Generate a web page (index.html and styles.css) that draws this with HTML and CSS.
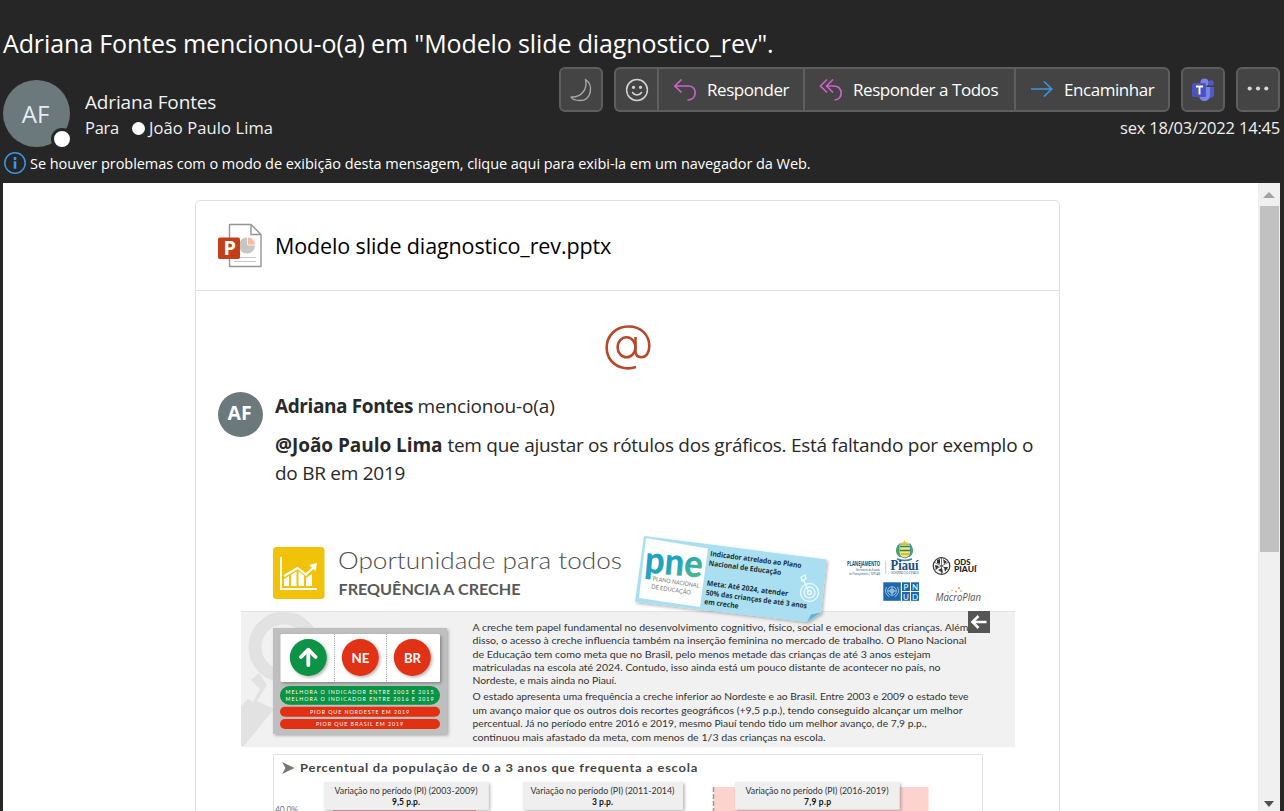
FILE: index.html
```html
<!DOCTYPE html>
<html lang="pt-BR">
<head>
<meta charset="utf-8">
<title>Modelo slide diagnostico_rev</title>
<link rel="stylesheet" href="styles.css">
</head>
<body>
<div class="window">
  <header class="mail-header">
    <h1 class="subject">Adriana Fontes mencionou-o(a) em "Modelo slide diagnostico_rev".</h1>
    <div class="meta">
      <div class="avatar">AF<span class="presence"></span></div>
      <div class="people">
        <div class="sender">Adriana Fontes</div>
        <div class="to"><span class="to-label">Para</span><span class="dot"></span><span class="to-name">João Paulo Lima</span></div>
      </div>
      <div class="right">
        <div class="actions">
          <button class="btn square"><svg width="24" height="24" viewBox="0 0 24 24" fill="none" stroke="#a8a8a8" stroke-width="1.4" stroke-linejoin="round"><path d="M16.500 1.500C25 7 22.500 22.500 11 22.500C7 22.500 3.500 21.500 2 19C12 19.500 19 11.500 16.500 1.500Z"/></svg></button>
          <div class="group">
            <button class="btn square"><svg width="24" height="24" viewBox="0 0 24 24" fill="none" stroke="#d2d2d2" stroke-width="1.5" stroke-linecap="round"><circle cx="12" cy="12" r="10.400"/><path d="M7.500 14.500c2 3.300 7 3.300 9 0"/><circle cx="8.500" cy="9.300" r=".9" fill="#d2d2d2"/><circle cx="15.500" cy="9.300" r=".9" fill="#d2d2d2"/></svg></button>
            <button class="btn reply"><svg width="24" height="24" viewBox="0 0 24 24" fill="none" stroke="#c864c8" stroke-width="1.700"><path d="M8.500 1.500L1.800 8L8.500 14.500M1.800 8H16C24.500 8 24.500 22 14.500 22"/></svg><span class="reply-text">Responder</span></button>
            <button class="btn reply-all"><svg width="24" height="24" viewBox="0 0 24 24" fill="none" stroke="#c864c8" stroke-width="1.700"><path d="M8 1.500L1.500 8L8 14.500M14 1.500L7.500 8L14 14.500M7.500 8H15C24.500 8 24.500 22 15.500 22"/></svg><span class="all-text">Responder a Todos</span></button>
            <button class="btn forward"><svg width="24" height="24" viewBox="0 0 24 24" fill="none" stroke="#3a96dd" stroke-width="1.700"><path d="M1 11H22M14 3.500L21.700 11L14 18.500"/></svg><span class="forward-text">Encaminhar</span></button>
          </div>
          <button class="btn square"><svg width="24" height="24" viewBox="0 0 24 24"><circle cx="20" cy="5" r="2.800" fill="#5059c9"/><path d="M16 9h7v7c0 3-2 4-4.500 4z" fill="#5059c9"/><circle cx="13.500" cy="4.500" r="4" fill="#7b83eb"/><path d="M8 9h11v8c0 8-11 8-11 0z" fill="#7b83eb"/><rect x="1" y="5" width="14" height="14" rx="1.500" fill="#4b53bc"/><path d="M5 8.500h7M8.500 8.500v8" stroke="#fff" stroke-width="1.900"/></svg></button>
          <button class="btn square"><svg width="24" height="24" viewBox="0 0 24 24" fill="#d6d6d6"><circle cx="3.700" cy="10.500" r="2.100"/><circle cx="12" cy="10.500" r="2.100"/><circle cx="20.300" cy="10.500" r="2.100"/></svg></button>
        </div>
        <div class="date">sex 18/03/2022 14:45</div>
      </div>
    </div>
    <div class="notice">
      <svg width="22" height="22" viewBox="0 0 22 22" fill="none" stroke="#3a96dd"><circle cx="11" cy="11" r="10.200" stroke-width="1.500"/><path d="M11 5v3M11 9.300v7.500" stroke-width="2.600"/></svg>
      <span class="notice-text">Se houver problemas com o modo de exibição desta mensagem, clique aqui para exibi-la em um navegador da Web.</span>
    </div>
  </header>

  <div class="viewer">
    <main class="page">
      <article class="card">
        <div class="file">
          <svg width="44" height="46" viewBox="0 0 44 46"><path d="M11.500 1.500H33L43 11.500V43.500H11.500Z" fill="#fff" stroke="#979593" stroke-width="1.400" stroke-linejoin="round"/><path d="M33 1.500V11.500H43" fill="none" stroke="#979593" stroke-width="1.400"/><circle cx="29" cy="22.500" r="8" fill="#c8c6c4"/><path d="M29.500 22V14a8 8 0 0 1 8 8z" fill="#f7b9a0" stroke="#fff" stroke-width=".8"/><path d="M16 34.500H38M16 38.500H38" stroke="#c8c6c4" stroke-width="1.200"/><rect x="0" y="14.500" width="22" height="21.500" rx="1.800" fill="#c43e1c"/><text x="5.500" y="32" class="ppt-letter">P</text></svg>
          <span class="file-name">Modelo slide diagnostico_rev.pptx</span>
        </div>
        <svg class="at" width="46" height="46" viewBox="0 0 46 46" fill="none" stroke="#b7472a" stroke-width="2.600"><path d="M31 42C26 43.600 22 43.600 19 43C8 41 1.700 33 1.700 22.500C1.700 10.500 11 1.500 23.500 1.500C36 1.500 44.300 10 44.300 21C44.300 28 41 32.200 36.500 32.200C32.500 32.200 30.500 30 30.500 26V12"/><ellipse cx="21.500" cy="22.300" rx="8.900" ry="10"/></svg>
        <section class="mention">
          <div class="small-avatar">AF</div>
          <div class="mention-body">
            <p class="who"><b>Adriana Fontes</b> <span class="verb">mencionou-o(a)</span></p>
            <p class="comment"><b>@João Paulo Lima</b> <span class="said">tem que ajustar os rótulos dos gráficos. Está faltando por exemplo o<br>do BR em 2019</span></p>
          </div>
        </section>
        <figure class="slide">
          <svg class="slide-head" width="774" height="86" viewBox="241 525 774 86">
            <defs>
              <linearGradient id="pne" x1="0" y1="0" x2="1" y2="1"><stop offset="0" stop-color="#2299dc"/><stop offset=".55" stop-color="#21a6b8"/><stop offset="1" stop-color="#68be72"/></linearGradient>
              <filter id="sh" x="-20%" y="-20%" width="150%" height="150%"><feDropShadow dx="1.500" dy="1.500" stdDeviation="1.500" flood-color="#000" flood-opacity=".3"/></filter>
            </defs>
            <rect x="273" y="547" width="51.500" height="52" rx="3.500" fill="#f0c20a"/>
            <g fill="none" stroke="#fff" stroke-width="1.900"><path d="M281 557V589H317"/><path d="M284 576L297.500 568L306 574.500L314 567" stroke-width="2.200"/></g>
            <path d="M309 565l8-2-1.500 8zM284 579l5-3v10h-5zM291 575l5.500-4v15H291zM298.500 571.500l5.500 4V586h-5.500zM306 578l6-4v12h-6z" fill="#fff"/>
            <text x="338" y="569" class="gothic light" font-size="24" textLength="284" lengthAdjust="spacingAndGlyphs" fill="#4c4c4c">Oportunidade para todos</text>
            <text x="338.500" y="594.500" class="gothic bold" font-size="16" textLength="182" lengthAdjust="spacingAndGlyphs" fill="#595959">FREQUÊNCIA A CRECHE</text>

            <path d="M644 536L826.500 559.500L821 613L807 622L635 602Z" fill="#a9dff0" filter="url(#sh)"/>
            <path d="M807 622L811 614.500L821 612.500Z" fill="#61b5cf"/>
            <path d="M646 538L708 548.500L700 607L639 598Z" fill="#fff"/>
            <text transform="translate(644 572.500) rotate(5)" class="round" font-size="38" textLength="58" lengthAdjust="spacingAndGlyphs" fill="url(#pne)">pne</text>
            <g fill="#777" font-size="6" class="gothic"><text transform="translate(652.500 580.500) rotate(9)" textLength="47" lengthAdjust="spacingAndGlyphs">PLANO NACIONAL</text><text transform="translate(651 588.500) rotate(9)" textLength="40" lengthAdjust="spacingAndGlyphs">DE EDUCAÇÃO</text></g>
            <g class="calibri" font-size="7.300" fill="#1c3038">
              <text transform="translate(710 556) rotate(7.500)" textLength="92" lengthAdjust="spacingAndGlyphs">Indicador atrelado ao Plano</text>
              <text transform="translate(708.500 565.500) rotate(7.500)" textLength="73" lengthAdjust="spacingAndGlyphs">Nacional de Educação</text>
              <text transform="translate(706.500 585.500) rotate(7.500)" textLength="82" lengthAdjust="spacingAndGlyphs">Meta: Até 2024, atender</text>
              <text transform="translate(705.500 595) rotate(7.500)" textLength="102" lengthAdjust="spacingAndGlyphs">50% das crianças de até 3 anos</text>
              <text transform="translate(704 604) rotate(7.500)" textLength="34.500" lengthAdjust="spacingAndGlyphs">em creche</text>
            </g>
            <g fill="none" stroke="#eefaff" stroke-width="1.300"><circle cx="809.500" cy="592.500" r="9"/><circle cx="809.500" cy="592.500" r="5.500"/><circle cx="809.500" cy="592.500" r="2"/><path d="M809 592L803 579M801 577l1 4 4-2-1-4z"/></g>

            <text x="847" y="566" class="calibri" font-size="6.500" textLength="33" lengthAdjust="spacingAndGlyphs" fill="#174f7d">PLANEJAMENTO</text>
            <text x="856" y="570.500" class="tiny" font-size="3.400" textLength="24" lengthAdjust="spacingAndGlyphs" fill="#174f7d">Secretaria do Estado</text>
            <text x="849" y="574.500" class="tiny" font-size="3.400" textLength="31" lengthAdjust="spacingAndGlyphs" fill="#174f7d">do Planejamento | SEPLAN</text>
            <path d="M885.700 561V574" stroke="#adc8dc" stroke-width=".8"/>
            <path d="M897.500 545q-4 8 2 12h10q6-4 2-12" fill="#52a657"/>
            <path d="M899 544h11.500v8q0 5-5.750 6q-5.750-1-5.750-6z" fill="#f1e38d" stroke="#3688a9" stroke-width=".9"/>
            <path d="M900 546.500h10M900 550.500h10" stroke="#278c48" stroke-width="1.500"/><path d="M901 554h8" stroke="#e5b92e" stroke-width="2"/><path d="M904.500 540l1 2.300h2.500l-2 1.500.8 2.300-2.300-1.500-2.300 1.500.8-2.300-2-1.500h2.500z" fill="#edc52a"/><path d="M897 559q7.500 3 15 0" fill="none" stroke="#397fa7" stroke-width="1.500"/>
            <text x="890.500" y="569.700" class="piaui" font-size="14" textLength="28" lengthAdjust="spacingAndGlyphs" fill="#164c7b">Piauí</text>
            <text x="891" y="574" class="tiny" font-size="3.300" textLength="28" lengthAdjust="spacingAndGlyphs" fill="#164c7b">GOVERNO DO ESTADO</text>
            <circle cx="941.500" cy="566" r="8.300" fill="none" stroke="#333" stroke-width="1.200"/>
            <path d="M941.500 558V574M934 562L949 570M934 570L949 562" stroke="#555" stroke-width=".8"/><path d="M937 560l3-1v5l-3-1zM943 559l4 3-3 2zM935 565l4 1-3 4zM944 567l4 0-3 5zM938 570l4-2 1 5z" fill="#333"/>
            <g class="heavy" font-size="7" fill="#222"><text x="954" y="564.500" textLength="16.500" lengthAdjust="spacingAndGlyphs">ODS</text><text x="954" y="571.500" textLength="22.500" lengthAdjust="spacingAndGlyphs">PIAUÍ</text></g>
            <g fill="#1b68ad"><rect x="883.300" y="582.300" width="17.500" height="18.500"/><rect x="902" y="582.300" width="8" height="8.800"/><rect x="911" y="582.300" width="8" height="8.800"/><rect x="902" y="592" width="8" height="8.800"/><rect x="911" y="592" width="8" height="8.800"/></g>
            <g fill="none" stroke="#d6e8f6" stroke-width=".7"><circle cx="892" cy="591" r="4.300"/><circle cx="892" cy="591" r="2"/><path d="M892 587v8M888 591h8M886.500 587q-3 6 3 10M897.500 587q3 6-3 10"/></g>
            <g class="gothic" font-size="8" fill="#fff" text-anchor="middle"><text x="906" y="589.800">P</text><text x="915" y="589.800">N</text><text x="906" y="599.500">U</text><text x="915" y="599.500">D</text></g>
            <text x="935.500" y="601" class="macro" font-size="10" textLength="45.500" lengthAdjust="spacingAndGlyphs" fill="#555">MacroPlan</text>
            <g fill="#e68a45"><circle cx="948" cy="592" r=".7"/><circle cx="952" cy="590.500" r=".7"/><circle cx="956" cy="591.500" r=".9"/><circle cx="959" cy="588" r="1"/><circle cx="961" cy="591" r=".8"/></g>
          </svg>
          <div class="band">
            <svg width="774" height="136" viewBox="241 611 774 136">
              <circle cx="284" cy="647" r="29" fill="none" stroke="#e2e2e2" stroke-width="13"/>
              <path d="M259 673L267 685L257 701L274 709L244 746H241V706L248 699L253 702L260 689L251 680Z" fill="#e2e2e2"/>
              <rect x="273" y="628" width="174" height="106" fill="#bfbfbf" filter="url(#sh)"/>
              <rect x="280.500" y="634" width="159.500" height="48" rx="1.500" fill="#fff" filter="url(#sh)"/>
              <path d="M334.500 634V682M386.500 634V682" stroke="#999" stroke-dasharray="1 1.200"/>
              <g filter="url(#sh)"><circle cx="308.300" cy="657.500" r="18.500" fill="#099344"/><circle cx="360.300" cy="657.500" r="18.500" fill="#e13012"/><circle cx="412.300" cy="657.500" r="18.500" fill="#e13012"/></g>
              <path d="M308.300 665V651M301 657L308.300 649.700L315.600 657" fill="none" stroke="#fff" stroke-width="3.800" stroke-linecap="round" stroke-linejoin="round"/>
              <g class="gothic bold" font-size="14" fill="#fff"><text x="351.500" y="663" textLength="18" lengthAdjust="spacingAndGlyphs">NE</text><text x="404" y="663" textLength="17" lengthAdjust="spacingAndGlyphs">BR</text></g>
              <rect x="280" y="686" width="160" height="18.800" rx="9.400" fill="#099344"/><rect x="280" y="706.800" width="160" height="10" rx="5" fill="#e13012"/><rect x="280" y="719" width="160" height="10" rx="5" fill="#e13012"/>
              <g class="gothic" font-size="5.300" fill="#fff"><text x="285.500" y="694" textLength="148">MELHORA O INDICADOR ENTRE 2003 E 2015</text><text x="285.500" y="700.700" textLength="148">MELHORA O INDICADOR ENTRE 2016 E 2019</text><text x="310" y="713.800" textLength="99">PIOR QUE NORDESTE EM 2019</text><text x="316" y="725.700" textLength="87">PIOR QUE BRASIL EM 2019</text></g>
              <g class="gothic" font-size="9.800" fill="#333">
                <text x="472.500" y="630.500" textLength="496" lengthAdjust="spacingAndGlyphs">A creche tem papel fundamental no desenvolvimento cognitivo, físico, social e emocional das crianças. Além</text>
                <text x="472.500" y="644" textLength="494" lengthAdjust="spacingAndGlyphs">disso, o acesso à creche influencia também na inserção feminina no mercado de trabalho. O Plano Nacional</text>
                <text x="472.500" y="657.500" textLength="458" lengthAdjust="spacingAndGlyphs">de Educação tem como meta que no Brasil, pelo menos metade das crianças de até 3 anos estejam</text>
                <text x="472.500" y="671" textLength="468" lengthAdjust="spacingAndGlyphs">matriculadas na escola até 2024. Contudo, isso ainda está um pouco distante de acontecer no país, no</text>
                <text x="472.500" y="684" textLength="144" lengthAdjust="spacingAndGlyphs">Nordeste, e mais ainda no Piauí.</text>
                <text x="472.500" y="700" textLength="496" lengthAdjust="spacingAndGlyphs">O estado apresenta uma frequência a creche inferior ao Nordeste e ao Brasil. Entre 2003 e 2009 o estado teve</text>
                <text x="472.500" y="713.700" textLength="490" lengthAdjust="spacingAndGlyphs">um avanço maior que os outros dois recortes geográficos (+9,5 p.p.), tendo conseguido alcançar um melhor</text>
                <text x="472.500" y="727" textLength="454" lengthAdjust="spacingAndGlyphs">percentual. Já no período entre 2016 e 2019, mesmo Piauí tendo tido um melhor avanço, de 7,9 p.p.,</text>
                <text x="472.500" y="741" textLength="353" lengthAdjust="spacingAndGlyphs">continuou mais afastado da meta, com menos de 1/3 das crianças na escola.</text>
              </g>
            </svg>
            <span class="back"><svg width="22" height="22" viewBox="0 0 22 22" fill="none" stroke="#fff" stroke-width="2.600"><path d="M18.500 11H5M10.500 5L4.500 11L10.500 17"/></svg></span>
          </div>
          <svg class="chart" width="774" height="64" viewBox="241 747 774 64">
            <path d="M273.500 811V754.500H982.500V811" fill="none" stroke="#e3e3e3"/>
            <path d="M282 762L294.500 768L282 774L285.500 768Z" fill="#777"/>
            <text x="300" y="771.700" class="gothic bold title" font-size="11.800" textLength="398" lengthAdjust="spacingAndGlyphs" fill="#444">Percentual da população de 0 a 3 anos que frequenta a escola</text>
            <rect x="714" y="787" width="214.500" height="24" fill="#fdd3cd"/><path d="M713.500 787V811" stroke="#999" stroke-width="1.500" stroke-dasharray="5 2"/>
            <path d="M333 810.500H476" stroke="#e7b5b0"/>
            <g fill="#efefef" filter="url(#sh)"><rect x="324" y="782" width="164.500" height="27.500"/><rect x="523" y="782" width="160" height="27.500"/><rect x="735" y="782" width="164.500" height="27.500"/></g>
            <g class="gothic" font-size="8.600" fill="#333"><text x="334.500" y="794" textLength="143" lengthAdjust="spacingAndGlyphs">Variação no período (PI) (2003-2009)</text><text x="530.500" y="794" textLength="144" lengthAdjust="spacingAndGlyphs">Variação no período (PI) (2011-2014)</text><text x="745.500" y="794" textLength="143" lengthAdjust="spacingAndGlyphs">Variação no período (PI) (2016-2019)</text></g>
            <g class="gothic bold" font-size="8.500" fill="#111"><text x="392" y="805" textLength="28">9,5 p.p.</text><text x="592" y="805" textLength="21">3 p.p.</text><text x="804" y="805" textLength="27">7,9 p.p</text></g>
            <text x="275" y="812.500" class="gothic" font-size="8.500" textLength="23" fill="#777">40.0%</text>
          </svg>
        </figure>
      </article>
    </main>
    <div class="scrollbar">
      <svg width="22" height="23" viewBox="0 0 22 23"><path d="M5 15L11 9L17 15Z" fill="#a3a3a3"/></svg>
      <div class="thumb"></div>
      <svg class="down" width="22" height="16" viewBox="0 0 22 16"><path d="M6 6L11 12L16 6Z" fill="#505050"/></svg>
    </div>
  </div>
</div>
</body>
</html>
```
FILE: styles.css
```css
* { box-sizing: border-box; }
body { margin: 0; background: #262626; overflow: hidden; font-family: "Open Sans", "Noto Sans", sans-serif; }
svg { display: block; flex: none; }
p, h1, figure { margin: 0; }
.window { width: 1284px; height: 811px; overflow: hidden; display: flex; flex-direction: column; padding: 0 4px 0 3px; }
.mail-header { height: 183px; flex: none; color: #fff; white-space: nowrap; }
.subject { height: 67px; padding-top: 26px; font-size: 25px; line-height: 34px; font-weight: 400; letter-spacing: -0.12px; }
.meta { display: flex; height: 80px; }
.avatar { position: relative; width: 67px; height: 67px; margin-top: 13px; border-radius: 50%; background: #6b797d; color: #e9eced; font-size: 24px; line-height: 67px; text-align: center; letter-spacing: 0; padding-right: 2px; flex: none; }
.presence { position: absolute; left: 48px; top: 48px; width: 22px; height: 22px; border-radius: 50%; background: #fff; border: 3px solid #262626; }
.people { margin-left: 15px; padding-top: 22px; }
.sender { font-size: 19px; line-height: 26px; letter-spacing: -0.15px; color: #f2f2f2; }
.to { display: flex; align-items: center; font-size: 16.5px; line-height: 26px; color: #f0f0f0; letter-spacing: -0.3px; }
.to-label { width: 47px; }
.to-name { letter-spacing: 0.1px; }
.dot { width: 13px; height: 13px; border-radius: 50%; background: #fff; margin-right: 4px; }
.right { margin-left: auto; }
.actions { display: flex; gap: 11px; }
.btn { height: 45px; display: flex; align-items: center; margin: 0; padding: 0; color: #fff; background: #444; border: 2px solid #5e5e5e; border-radius: 6px; font-family: inherit; font-size: 17px; letter-spacing: -0.45px; }
.square { width: 44px; justify-content: center; }
.group { display: flex; }
.group .btn { border-radius: 0; border-right: 0; }
.group .square { width: 43px; border-radius: 6px 0 0 6px; }
.group .reply { width: 146px; padding-left: 14px; gap: 10px; }
.group .reply-all { width: 211px; padding-left: 14px; gap: 10px; }
.group .forward { width: 156px; padding-left: 14px; gap: 10px; border-right: 2px solid #5e5e5e; border-radius: 0 6px 6px 0; }
.date { font-size: 16.5px; line-height: 24px; margin-top: 4px; text-align: right; color: #f0f0f0; letter-spacing: -0.2px; }
.notice { display: flex; align-items: center; height: 32px; padding-left: 1px; gap: 4px; font-size: 14.5px; letter-spacing: -0.05px; }
.viewer { display: flex; height: 628px; background: #fff; }
.page { flex: 1; padding: 17px 0 0 192px; overflow: hidden; }
.card { width: 865px; height: 640px; border: 1px solid #e0e0e0; border-radius: 5px; }
.file { display: flex; align-items: center; gap: 13px; height: 90px; padding-left: 22px; border-bottom: 1px solid #e0e0e0; font-size: 21.500px; letter-spacing: -0.12px; color: #000; }
.ppt-letter { font: 700 20px "Open Sans", sans-serif; fill: #fff; }
.at { margin: 34px 0 0 409px; }
.mention { display: flex; margin: 21px 0 0 22px; gap: 12px; height: 133px; color: #212121; font-size: 19px; line-height: 28px; white-space: nowrap; }
.small-avatar { width: 45px; height: 45px; border-radius: 50%; background: #6b797d; color: #fff; font-size: 19.5px; line-height: 42px; font-weight: 700; text-align: center; letter-spacing: 0; padding-right: 2px; }
.who { height: 39px; letter-spacing: -0.4px; }
.verb { letter-spacing: -0.15px; }
.mention-body { color: #292929; }
.comment b { letter-spacing: -0.05px; }
.said { letter-spacing: -0.27px; }
.slide { width: 774px; height: 300px; margin-left: 45px; }
.slide-head { position: relative; z-index: 1; overflow: visible; }
.band { position: relative; height: 136px; background: #f1f1f1; border-top: 1px solid #e4e4e4; }
.band > svg { margin-top: -1px; }
.back { position: absolute; z-index: 2; right: 25px; top: -1px; background: #555; }
.gothic { font-family: Lato, sans-serif; }
.light { font-weight: 300; }
.bold { font-weight: 700; }
.title { letter-spacing: 0.7px; }
.calibri { font-family: "Open Sans", sans-serif; font-weight: 700; }
.tiny { font-family: "Open Sans", sans-serif; font-weight: 400; }
.round { font-family: Lato, sans-serif; font-weight: 900; }
.heavy { font-family: Lato, sans-serif; font-weight: 900; }
.piaui { font-family: "Liberation Serif", serif; font-weight: 700; }
.macro { font-family: "Open Sans", sans-serif; font-style: italic; }
.scrollbar { width: 22px; background: #f0f0f0; display: flex; flex-direction: column; }
.thumb { width: 19px; height: 346px; margin-left: 2px; background: #c1c1c1; }
.down { margin-top: auto; }
```
